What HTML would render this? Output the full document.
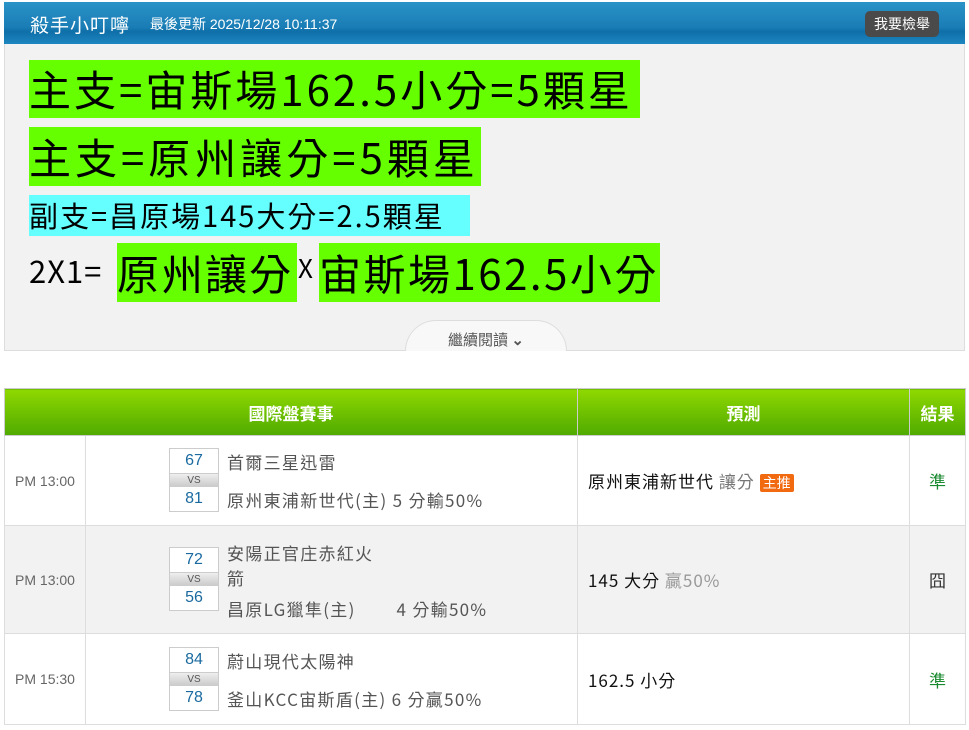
<!DOCTYPE html>
<html><head><meta charset="utf-8"><style>
*{margin:0;padding:0;box-sizing:border-box}
body{width:969px;height:730px;background:#fff;font-family:"Liberation Sans","Noto Sans CJK TC",sans-serif;position:relative;overflow:hidden}
.hd{position:absolute;left:4px;top:2px;width:961px;height:42px;background:linear-gradient(#2a93c8,#1a7db5 60%,#0f6fa8 70%,#1d86c0);color:#fff}
.hd .t{position:absolute;left:26px;top:9px;font-size:19px;letter-spacing:1px}
.hd .u{position:absolute;left:146px;top:12px;font-size:14px}
.hd .b{position:absolute;right:26px;top:9px;width:74px;height:26px;border-radius:5px;background:#4a4a4a;font-size:14px;text-align:center;line-height:26px}
.box{position:absolute;left:4px;top:44px;width:961px;height:307px;background:#f2f2f2;border:1px solid #ddd;border-top:none}
.l{position:absolute;color:#000;white-space:nowrap;font-family:"Noto Sans CJK TC",sans-serif;overflow:hidden}
.g{background:#66ff00}.c{background:#66ffff}
.more{position:absolute;left:405px;top:320px;width:162px;height:31px;background:#f8f8f8;border:1px solid #ddd;border-bottom:none;border-radius:40px 40px 0 0;text-align:center;font-size:15px;color:#555;padding-top:8px;font-family:"Noto Sans CJK TC",sans-serif}
table{position:absolute;left:4px;top:388px;width:961px;border-collapse:collapse;font-size:16px;table-layout:fixed}
th{height:47px;background:linear-gradient(#8fd800,#4faa00);color:#fff;font-size:17px;font-weight:bold;border:1px solid #ccc}
td{border:1px solid #ddd;color:#333}
.tm{color:#666;font-size:14px;text-align:center}
.sc{position:absolute;left:83px;width:50px;border:1px solid #ccc;text-align:center;color:#1a6aa0;font-size:16px}
.vs{height:14px;background:linear-gradient(#eee,#ccc);font-size:10px;color:#555;line-height:14px;border-top:1px solid #ccc;border-bottom:1px solid #ccc}
.n{height:24px;line-height:24px;background:#fff}
.tn{position:absolute;left:141px;color:#555;font-size:17px;font-family:"Noto Sans CJK TC",sans-serif;line-height:24px;letter-spacing:1.3px;white-space:nowrap}
.tag{display:inline-block;background:#f26a10;color:#fff;font-size:14px;padding:0 3px;border-radius:2px;line-height:18px;letter-spacing:0}
.ok{color:#1a8a30;text-align:center;font-size:17px}
.p{padding-left:10px;color:#111;font-size:17px;font-family:"Noto Sans CJK TC",sans-serif;letter-spacing:1px}
</style></head><body>
<div class="hd"><span class="t">殺手小叮嚀</span><span class="u">最後更新 2025/12/28 10:11:37</span><span class="b">我要檢舉</span></div>
<div class="box"></div>
<div class="l g" style="left:29px;top:60px;height:58px;font-size:42px;line-height:58px;width:611px;letter-spacing:3px">主支=宙斯場162.5小分=5顆星</div>
<div class="l g" style="left:29px;top:127px;height:59px;font-size:42px;line-height:59px;width:452px;letter-spacing:4px">主支=原州讓分=5顆星</div>
<div class="l c" style="left:29px;top:195px;height:41px;font-size:29px;line-height:41px;width:441px;letter-spacing:2px">副支=昌原場145大分=2.5顆星</div>
<div class="l" style="left:29px;top:250px;font-size:31px;line-height:40px;letter-spacing:1px">2X1=</div>
<div class="l g" style="left:117px;top:243px;width:180px;height:59px;font-size:42px;line-height:59px;letter-spacing:2px">原州讓分</div>
<div class="l" style="left:298px;top:250px;font-size:26px;line-height:36px">X</div>
<div class="l g" style="left:319px;top:243px;width:341px;height:59px;font-size:42px;line-height:59px;letter-spacing:2.5px">宙斯場162.5小分</div>
<div class="more">繼續閱讀 <b>⌄</b></div>
<table>
<colgroup><col style="width:81px"><col style="width:492px"><col style="width:332px"><col style="width:56px"></colgroup>
<tr><th colspan="2">國際盤賽事</th><th>預測</th><th>結果</th></tr>
<tr style="height:90px"><td class="tm">PM 13:00</td><td style="position:relative">
<div class="sc" style="top:12px"><div class="n">67</div><div class="vs">VS</div><div class="n">81</div></div>
<div class="tn" style="top:14px">首爾三星迅雷</div><div class="tn" style="top:52px">原州東浦新世代(主) 5 分輸50%</div></td>
<td class="p">原州東浦新世代 <span style="color:#777">讓分</span> <span class="tag">主推</span></td><td class="ok">準</td></tr>
<tr style="height:108px;background:#f2f2f2"><td class="tm">PM 13:00</td><td style="position:relative">
<div class="sc" style="top:21px"><div class="n">72</div><div class="vs">VS</div><div class="n">56</div></div>
<div class="tn" style="top:14px;line-height:25px">安陽正官庄赤紅火<br>箭</div><div class="tn" style="top:71px">昌原LG獵隼(主)&nbsp;&nbsp;&nbsp;&nbsp;&nbsp;&nbsp;&nbsp;&nbsp;4 分輸50%</div></td>
<td class="p">145 大分 <span style="color:#999">贏50%</span></td><td style="text-align:center;font-size:17px">囧</td></tr>
<tr style="height:91px"><td class="tm">PM 15:30</td><td style="position:relative">
<div class="sc" style="top:13px"><div class="n">84</div><div class="vs">VS</div><div class="n">78</div></div>
<div class="tn" style="top:15px">蔚山現代太陽神</div><div class="tn" style="top:53px">釜山KCC宙斯盾(主) 6 分贏50%</div></td>
<td class="p">162.5 小分</td><td class="ok">準</td></tr>
</table>
</body></html>
